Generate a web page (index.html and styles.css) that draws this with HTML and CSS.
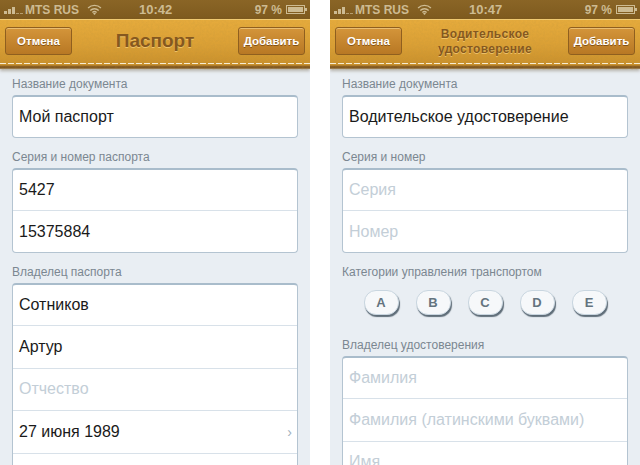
FILE: index.html
```html
<!DOCTYPE html>
<html lang="en">
<head>
<meta charset="UTF-8">
<title>Документы</title>
<link rel="stylesheet" href="styles.css">
</head>
<body>

<!-- left screen -->
<section class="phone">
  <div class="status">
    <span class="bars"><i class="b1"></i><i class="b2"></i><i class="b3"></i><i class="b0"></i><i class="b0"></i></span>
    <span class="carrier">MTS RUS</span>
    <svg class="wifi" width="15" height="11" viewBox="0 0 16 12"><path d="M1 4.4a10 10 0 0 1 14 0M3.4 7a6.6 6.6 0 0 1 9.2 0M5.7 9.2a3.4 3.4 0 0 1 4.6 0" fill="none" stroke="#cdbb92" stroke-width="1.5"/><path d="M8 12l-1.6-1.7a2.2 2.2 0 0 1 3.2 0z" fill="#cdbb92"/></svg>
    <span class="clock">10:42</span>
    <span class="pct">97 %</span>
    <span class="batt"><i></i></span>
  </div>
  <header class="nav">
    <svg class="grain" width="310" height="50"><filter id="leather"><feTurbulence type="fractalNoise" baseFrequency=".45" numOctaves="2" seed="4"/><feColorMatrix values="0 0 0 0 .45  0 0 0 0 .28  0 0 0 0 .05  1.4 0 0 0 -.45"/></filter><rect width="310" height="50" filter="url(#leather)"/></svg>
    <button class="navbtn">Отмена</button>
    <h1>Паспорт</h1>
    <button class="navbtn">Добавить</button>
  </header>
  <main class="form">
    <label>Название документа</label>
    <div class="box"><div class="row">Мой паспорт</div></div>
    <label>Серия и номер паспорта</label>
    <div class="box">
      <div class="row">5427</div>
      <div class="row">15375884</div>
    </div>
    <label>Владелец паспорта</label>
    <div class="box">
      <div class="row">Сотников</div>
      <div class="row">Артур</div>
      <div class="row empty">Отчество</div>
      <div class="row">27 июня 1989<span class="chev">›</span></div>
      <div class="row"></div>
    </div>
  </main>
</section>

<!-- right screen -->
<section class="phone">
  <div class="status">
    <span class="bars"><i class="b1"></i><i class="b2"></i><i class="b3"></i><i class="b0"></i><i class="b0"></i></span>
    <span class="carrier">MTS RUS</span>
    <svg class="wifi" width="15" height="11" viewBox="0 0 16 12"><path d="M1 4.4a10 10 0 0 1 14 0M3.4 7a6.6 6.6 0 0 1 9.2 0M5.7 9.2a3.4 3.4 0 0 1 4.6 0" fill="none" stroke="#cdbb92" stroke-width="1.5"/><path d="M8 12l-1.6-1.7a2.2 2.2 0 0 1 3.2 0z" fill="#cdbb92"/></svg>
    <span class="clock">10:47</span>
    <span class="pct">97 %</span>
    <span class="batt"><i></i></span>
  </div>
  <header class="nav">
    <svg class="grain" width="310" height="50"><rect width="310" height="50" filter="url(#leather)"/></svg>
    <button class="navbtn">Отмена</button>
    <h1 class="small">Водительское удостоверение</h1>
    <button class="navbtn">Добавить</button>
  </header>
  <main class="form">
    <label>Название документа</label>
    <div class="box"><div class="row">Водительское удостоверение</div></div>
    <label>Серия и номер</label>
    <div class="box">
      <div class="row empty">Серия</div>
      <div class="row empty">Номер</div>
    </div>
    <label>Категории управления транспортом</label>
    <div class="cats">
      <span class="cat">A</span>
      <span class="cat">B</span>
      <span class="cat">C</span>
      <span class="cat">D</span>
      <span class="cat">E</span>
    </div>
    <label>Владелец удостоверения</label>
    <div class="box">
      <div class="row empty">Фамилия</div>
      <div class="row empty">Фамилия (латинскими буквами)</div>
      <div class="row empty">Имя</div>
    </div>
  </main>
</section>

</body>
</html>
```

FILE: styles.css
```css
*{box-sizing:border-box;margin:0;padding:0}
html,body{height:465px;overflow:hidden}
body{display:flex;justify-content:space-between;width:640px;background:#fff;font-family:"Liberation Sans",Arial,sans-serif}

.phone{width:310px;height:465px;overflow:hidden;background:#e9eef3}

/* status bar */
.status{height:19px;display:flex;align-items:center;padding:0 3px 0 4px;background:linear-gradient(#8a6526,#7e5a1e);color:#cdbb92;font-size:12px;font-weight:700;position:relative}
.bars{display:flex;align-items:flex-end;gap:1px;width:20px;height:8px;margin-right:1px}
.bars i{display:block;width:3px;background:#cdbb92}
.bars .b1{height:3px}
.bars .b2{height:5px}
.bars .b3{height:7px}
.bars .b0{height:1px;opacity:.7}
.carrier{font-size:12px;width:58px;white-space:nowrap}
.wifi{margin-left:4px}
.clock{position:absolute;left:139px;font-size:13px;font-weight:700}
.pct{margin-left:auto;margin-right:4px;font-size:12px}
.batt{display:block;width:19px;height:9px;border:1px solid #cdbb92;padding:1px;margin-right:2px;position:relative}
.batt i{display:block;height:100%;background:#cdbb92}
.batt:after{content:"";position:absolute;right:-3px;top:2px;width:2px;height:3px;background:#cdbb92}

/* leather nav bar */
.nav{height:50px;display:flex;align-items:flex-start;justify-content:space-between;padding:7px 5px 0;position:relative;background:linear-gradient(#e6ab3c 0,#dba035 50%,#c9902c 92%,#8c6024 94%,#7a5420 98%,#b9a27c 100%);border-top:1px solid #f0c970;box-shadow:0 2px 3px rgba(90,70,40,.35)}
.nav:after{content:"";position:absolute;left:0;right:0;bottom:5px;height:1px;background:repeating-linear-gradient(90deg,#f6ecd2 0,#f6ecd2 6px,transparent 6px,transparent 8px)}
.grain{position:absolute;left:0;top:0;opacity:.22}
.navbtn{position:relative;width:67px;height:28px;border:1px solid #8f5f1f;border-radius:3px;background:linear-gradient(#d4953a,#b87824);color:#fff;font:700 11.5px "Liberation Sans",Arial,sans-serif;text-shadow:0 1px 0 rgba(90,50,10,.6);box-shadow:inset 0 1px 0 rgba(255,230,170,.5)}
.nav h1{position:relative;font-size:19px;font-weight:700;line-height:28px;color:#85581f;text-shadow:0 1px 0 rgba(255,220,140,.6)}
.nav h1.small{width:110px;font-size:12px;line-height:15px;text-align:center;margin-top:0;letter-spacing:.3px}

/* form */
.form{padding:7px 12px 0}
.form label{display:block;height:19px;font-size:12px;line-height:17px;color:#7b8791}
.box{background:#fff;border:1px solid #b4c4d1;border-top:2px solid #a9bccb;border-radius:4px;margin-bottom:11px}
.row{height:42.4px;padding:0 6px;display:flex;align-items:center;justify-content:space-between;border-top:1px solid #d8e1e9;font-size:16px;color:#1a1a1a}
.row:first-child{border-top:0;height:40px}
.row.empty{color:#c3ced7}
.chev{color:#9fb0be;font-size:14px;margin-right:-1px}

/* licence categories */
.cats{display:flex;gap:17px;justify-content:center;padding:7px 0 0;height:54px}
.cat{width:35px;height:25px;border-radius:12px;background:#f6f8fa;border:1px solid #c9d6e0;box-shadow:1px 2px 1px #5f6d78;color:#64747f;font-size:13px;font-weight:700;line-height:23px;text-align:center}
```
